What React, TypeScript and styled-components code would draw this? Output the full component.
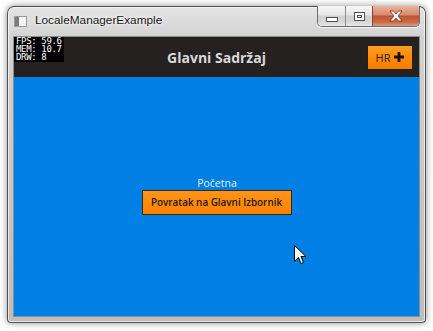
import React from "react";
import styled, { createGlobalStyle } from "styled-components";

const GlobalStyle = createGlobalStyle`
  html, body { margin: 0; padding: 0; background: #ffffff; overflow: hidden; }
  #root { width: 433px; height: 331px; }
`;

const Desktop = styled.div`
  width: 433px;
  height: 331px;
  box-sizing: border-box;
  padding: 6px 0 0 7px;
  position: relative;
  background: #ffffff;
`;

const Window = styled.div`
  width: 419px;
  height: 317px;
  box-sizing: border-box;
  border: 1px solid rgba(40, 40, 40, 0.75);
  border-radius: 7px 7px 4px 4px;
  background: linear-gradient(to bottom, #e4e4e4 0%, #d2d2d2 10%, #c6c6c6 60%, #bdbdbd 100%);
  box-shadow: 0 0 7px rgba(0, 0, 0, 0.45), inset 0 0 0 1px rgba(255, 255, 255, 0.65);
  display: flex;
  flex-direction: column;
  padding: 0 5px 5px 5px;
`;

const TitleBar = styled.div`
  height: 29px;
  display: flex;
  align-items: flex-start;
  flex-shrink: 0;
`;

const AppIcon = styled.div`
  width: 13px;
  height: 11px;
  margin: 9px 0 0 1px;
  box-sizing: border-box;
  border: 1px solid #9a9a9a;
  background: linear-gradient(to right, #7c7c7c 0 4px, #f4f4f4 4px);
`;

const TitleText = styled.div`
  margin: 6px 0 0 8px;
  font-family: "Liberation Sans", Arial, sans-serif;
  font-size: 11.8px;
  color: #151515;
  text-shadow: 0 0 6px #ffffff, 0 0 3px #ffffff;
  flex: 1;
`;

const CaptionGroup = styled.div`
  display: flex;
  margin-top: -1px;
  border: 1px solid #6e6e6e;
  border-top: none;
  border-radius: 0 0 5px 5px;
  overflow: hidden;
  box-shadow: 0 1px 0 rgba(255, 255, 255, 0.7);
`;

const CaptionButton = styled.div<{ $w: number; $close?: boolean }>`
  width: ${(p) => p.$w}px;
  height: 20px;
  display: flex;
  align-items: center;
  justify-content: center;
  box-sizing: border-box;
  border-left: ${(p) => (p.$close ? "1px solid #7a4a3a" : "1px solid #8a8a8a")};
  &:first-child { border-left: none; }
  background: ${(p) =>
    p.$close
      ? "linear-gradient(to bottom, #e9b29a 0%, #d98a6c 45%, #c0532f 50%, #c86a48 80%, #dc9b7e 100%)"
      : "linear-gradient(to bottom, #f6f6f6 0%, #e6e6e6 45%, #cfcfcf 50%, #d8d8d8 80%, #e8e8e8 100%)"};
`;

const MinGlyph = styled.div`
  width: 10px;
  height: 3px;
  margin-top: 6px;
  background: #ffffff;
  border: 1px solid #505050;
`;

const MaxGlyph = styled.div`
  width: 11px;
  height: 9px;
  box-sizing: border-box;
  border: 1px solid #505050;
  background: #ffffff;
  display: flex;
  align-items: center;
  justify-content: center;
  &::after {
    content: "";
    width: 3px;
    height: 1px;
    border: 1px solid #505050;
    background: #ffffff;
  }
`;

const Client = styled.div`
  flex: 1;
  display: flex;
  flex-direction: column;
  border: 1px solid #8c8c8c;
  position: relative;
  overflow: hidden;
`;

const Header = styled.div`
  height: 40px;
  flex-shrink: 0;
  background: #242120;
  display: grid;
  grid-template-columns: 1fr auto 1fr;
  align-items: center;
`;

const HeaderTitle = styled.div`
  grid-column: 2;
  font-family: "Open Sans", "Noto Sans", sans-serif;
  font-weight: 700;
  font-size: 14px;
  color: #d9d9d9;
`;

const LangButton = styled.div`
  grid-column: 3;
  justify-self: end;
  margin-right: 6px;
  width: 46px;
  height: 25px;
  box-sizing: border-box;
  border: 1px solid #2c1e0c;
  background: linear-gradient(to bottom, #ff9d22 0%, #ff8a0a 55%, #f47c00 100%);
  display: flex;
  align-items: center;
  justify-content: center;
  gap: 4px;
  font-family: "Open Sans", "Noto Sans", sans-serif;
  font-size: 11px;
  color: #241a0c;
`;

const Stats = styled.div`
  position: absolute;
  left: 0;
  top: 0;
  width: 50px;
  height: 25px;
  background: #000000;
  box-sizing: border-box;
  padding: 0 0 0 2px;
  font-family: "DejaVu Sans Mono", monospace;
  font-size: 9px;
  line-height: 8px;
  letter-spacing: -0.35px;
  color: #ffffff;
  white-space: pre;
`;

const Main = styled.div`
  flex: 1;
  background: #0080e5;
  display: flex;
  flex-direction: column;
  align-items: center;
  justify-content: center;
  padding-bottom: 2px;
`;

const PageLabel = styled.div`
  font-family: "Open Sans", "Noto Sans", sans-serif;
  font-size: 10.5px;
  color: #e6f0fa;
  line-height: 13px;
  margin-left: 1px;
`;

const BackButton = styled.div`
  width: 150px;
  height: 25px;
  box-sizing: border-box;
  border: 1px solid #3a2710;
  background: linear-gradient(to bottom, #ff951a 0%, #ff8a0a 60%, #f97f00 100%);
  display: flex;
  align-items: center;
  justify-content: center;
  font-family: "Open Sans", "Noto Sans", sans-serif;
  font-weight: 600;
  font-size: 9.9px;
  color: #1e160a;
`;

const Cursor = styled.svg`
  position: absolute;
  left: 294px;
  top: 245px;
`;

export default function App() {
  return (
    <>
      <GlobalStyle />
      <Desktop>
        <Window>
          <TitleBar>
            <AppIcon />
            <TitleText>LocaleManagerExample</TitleText>
            <CaptionGroup>
              <CaptionButton $w={27}>
                <MinGlyph />
              </CaptionButton>
              <CaptionButton $w={27}>
                <MaxGlyph />
              </CaptionButton>
              <CaptionButton $w={47} $close>
                <svg width="14" height="12" viewBox="0 0 14 12">
                  <path
                    d="M1 1 L4.5 1 L7 4 L9.5 1 L13 1 L9 6 L13 11 L9.5 11 L7 8 L4.5 11 L1 11 L5 6 Z"
                    fill="#ffffff"
                    stroke="#6a3020"
                    strokeWidth="0.8"
                  />
                </svg>
              </CaptionButton>
            </CaptionGroup>
          </TitleBar>
          <Client>
            <Header>
              <HeaderTitle>Glavni Sadržaj</HeaderTitle>
              <LangButton>
                <span>HR</span>
                <svg width="10" height="10" viewBox="0 0 10 10">
                  <path d="M3.6 0 H6.4 V3.6 H10 V6.4 H6.4 V10 H3.6 V6.4 H0 V3.6 H3.6 Z" fill="#1a1208" />
                </svg>
              </LangButton>
            </Header>
            <Stats>{"FPS: 59.6\nMEM: 10.7\nDRW: 8"}</Stats>
            <Main>
              <PageLabel>Početna</PageLabel>
              <BackButton>Povratak na Glavni Izbornik</BackButton>
            </Main>
          </Client>
        </Window>
        <Cursor width="13" height="20" viewBox="0 0 13 20">
          <path
            d="M0.5 0.5 L0.5 16.5 L4.5 12.5 L7 18.5 L9.5 17.5 L7 11.5 L12 11.5 Z"
            fill="#ffffff"
            stroke="#000000"
            strokeWidth="1"
          />
        </Cursor>
      </Desktop>
    </>
  );
}
